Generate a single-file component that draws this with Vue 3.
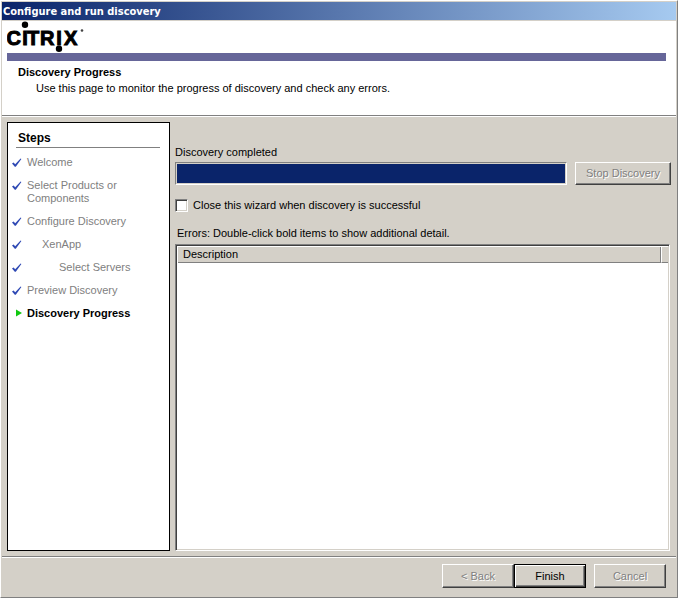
<script setup>
import { ref } from 'vue'

const steps = [
  { label: 'Welcome', level: 0, done: true },
  { label: 'Select Products or Components', level: 0, done: true },
  { label: 'Configure Discovery', level: 0, done: true },
  { label: 'XenApp', level: 1, done: true },
  { label: 'Select Servers', level: 2, done: true },
  { label: 'Preview Discovery', level: 0, done: true },
  { label: 'Discovery Progress', level: 0, done: false },
]

const progress = ref(100)
const closeWhenDone = ref(false)
</script>

<template>
  <div class="window">
    <div class="titlebar">Configure and run discovery</div>

    <header class="banner">
      <svg class="logo" width="80" height="32" viewBox="0 0 80 32" role="img" aria-label="Citrix">
        <text class="letters" x="-0.4 15.2 20 33 49.2 57" y="24">CITRIX</text>
        <circle cx="18" cy="3.8" r="3.2" />
        <circle cx="52" cy="27.8" r="3.2" />
        <circle cx="75" cy="9.5" r="1.3" fill="#444" />
      </svg>
      <div class="stripe"></div>
      <h1>Discovery Progress</h1>
      <p>Use this page to monitor the progress of discovery and check any errors.</p>
    </header>

    <main class="content">
      <nav class="steps">
        <h2>Steps</h2>
        <ol>
          <li v-for="step in steps" :key="step.label" :class="{ current: !step.done }">
            <svg v-if="step.done" class="mark" width="10" height="10" viewBox="0 0 10 10" aria-hidden="true">
              <path d="M0 5.4 1.6 4.6 3.2 6.3 8.6 0.6 9.4 0.9 3.8 8.8 2.8 8.8Z" fill="#2f49b4" />
            </svg>
            <svg v-else class="mark" width="10" height="10" viewBox="0 0 10 10" aria-hidden="true">
              <path d="M4 0.5 10 4 4 7.5Z" fill="#10c810" />
            </svg>
            <span :class="'level-' + step.level">{{ step.label }}</span>
          </li>
        </ol>
      </nav>

      <section class="details">
        <label for="discovery">Discovery completed</label>
        <div class="progress-row">
          <progress id="discovery" max="100" :value="progress"></progress>
          <button type="button" class="stop" disabled>Stop Discovery</button>
        </div>
        <div class="option">
          <input id="close-wizard" v-model="closeWhenDone" type="checkbox" />
          <label for="close-wizard">Close this wizard when discovery is successful</label>
        </div>
        <p id="errors-caption" class="caption">Errors: Double-click bold items to show additional detail.</p>
        <div class="listview">
          <table aria-labelledby="errors-caption">
            <thead>
              <tr>
                <th scope="col">Description</th>
                <td class="filler"></td>
              </tr>
            </thead>
            <tbody></tbody>
          </table>
        </div>
      </section>
    </main>

    <footer class="actions">
      <button type="button" disabled>&lt; Back</button>
      <button type="button" class="default">Finish</button>
      <button type="button" class="cancel" disabled>Cancel</button>
    </footer>
  </div>
</template>

<style>
body {
  margin: 0;
}
</style>

<style scoped>
* {
  box-sizing: border-box;
}

.window {
  display: flex;
  flex-direction: column;
  min-height: 100vh;
  border: 1px solid #fff;
  border-right-color: #808080;
  border-bottom-color: #808080;
  background: #d4d0c8;
  color: #000;
  font-family: "Liberation Sans", Arial, sans-serif;
  font-size: 11px;
  line-height: 13px;
}

.titlebar {
  margin: 1px 1px 0;
  padding: 1px 1px 0;
  background: linear-gradient(90deg, #0a246a, #a6caf0);
  color: #fff;
  font-family: "DejaVu Sans Condensed", Tahoma, sans-serif;
  font-size: 11px;
  font-weight: bold;
  line-height: 17px;
}

.banner {
  display: flex;
  flex-direction: column;
  height: 95px;
  margin: 1px 1px 0;
  padding-left: 5px;
  border-bottom: 1px solid #808080;
  background: #fff;
  box-shadow: 0 1px #fff;
}

.logo {
  flex: none;
}

.letters {
  font-family: "Liberation Sans", Arial, sans-serif;
  font-size: 20px;
  font-weight: bold;
  stroke: #000;
  stroke-width: 1px;
}

.stripe {
  flex: none;
  height: 8px;
  margin-right: 10px;
  background: #666699;
}

h1 {
  margin: 5px 0 0 11px;
  font-size: 11px;
  font-weight: bold;
  line-height: 13px;
}

.banner p {
  margin: 3px 0 0 29px;
}

.content {
  display: flex;
  flex: 1;
  gap: 5px;
  padding: 6px 6px 5px;
}

.steps {
  flex: none;
  width: 163px;
  padding: 9px 9px 0 4px;
  border: 1px solid #000;
  background: #fff;
  color: #808080;
}

.steps h2 {
  margin: 0 0 0 4px;
  padding: 0 2px 2px;
  border-bottom: 1px solid #808080;
  color: #000;
  font-size: 12px;
  line-height: 13px;
}

ol {
  display: flex;
  flex-direction: column;
  gap: 10px;
  margin: 8px 0 0;
  padding: 0;
  list-style: none;
}

li {
  display: flex;
  gap: 5px;
}

.mark {
  flex: none;
  margin-top: 2px;
}

.level-1 {
  padding-left: 15px;
}

.level-2 {
  padding-left: 32px;
}

.current {
  color: #000;
  font-weight: bold;
}

.details {
  display: flex;
  flex: 1;
  flex-direction: column;
  min-width: 0;
  padding-top: 24px;
}

.progress-row {
  display: flex;
  gap: 8px;
  margin-top: 3px;
}

progress {
  flex: 1;
  min-width: 0;
  height: 23px;
  padding: 1px;
  border: 1px solid;
  border-color: #808080 #fff #fff #808080;
  background: #d4d0c8;
  appearance: none;
}

progress::-webkit-progress-bar {
  background: #d4d0c8;
}

progress::-webkit-progress-value {
  background: #0a246a;
}

button {
  width: 72px;
  height: 24px;
  padding: 0;
  border: 1px solid;
  border-color: #fff #404040 #404040 #fff;
  background: #d4d0c8;
  box-shadow: inset -1px -1px #808080;
  color: #000;
  font: inherit;
}

button:disabled {
  color: #808080;
  text-shadow: 1px 1px #fff;
}

.stop {
  width: 96px;
  height: 23px;
}

.option {
  display: flex;
  align-items: center;
  gap: 5px;
  margin-top: 14px;
}

.option input {
  width: 13px;
  height: 13px;
  margin: 0;
  border: 1px solid;
  border-color: #808080 #fff #fff #808080;
  background: #fff;
  box-shadow: inset 1px 1px #404040, inset -1px -1px #d4d0c8;
  appearance: none;
}

.option input:checked {
  background: radial-gradient(#000 40%, #fff 45%);
}

.caption {
  margin: 15px 0 4px 2px;
}

.listview {
  flex: 1;
  margin-right: 1px;
  border: 1px solid;
  border-color: #808080 #fff #fff #808080;
  background: #fff;
  box-shadow: inset 1px 1px #404040, inset -1px -1px #d4d0c8;
  padding: 2px 1px 1px 2px;
}

table {
  width: 100%;
  border-collapse: separate;
  border-spacing: 0;
}

th,
.filler {
  height: 16px;
  padding: 0 5px;
  border-right: 1px solid #808080;
  border-bottom: 1px solid #808080;
  background: #d4d0c8;
  font-weight: normal;
  text-align: left;
}

.filler {
  width: 7px;
  padding: 0;
  border-right: 0;
  border-left: 1px solid #fff;
}

.actions {
  display: flex;
  justify-content: flex-end;
  margin: 0 1px;
  padding: 7px 10px 9px;
  border-top: 1px solid #808080;
  box-shadow: inset 0 1px #fff;
}

.default {
  border-color: #000;
  box-shadow: inset 1px 1px #fff, inset -1px -1px #404040, inset -2px -2px #808080;
}

.cancel {
  margin-left: 8px;
}
</style>
